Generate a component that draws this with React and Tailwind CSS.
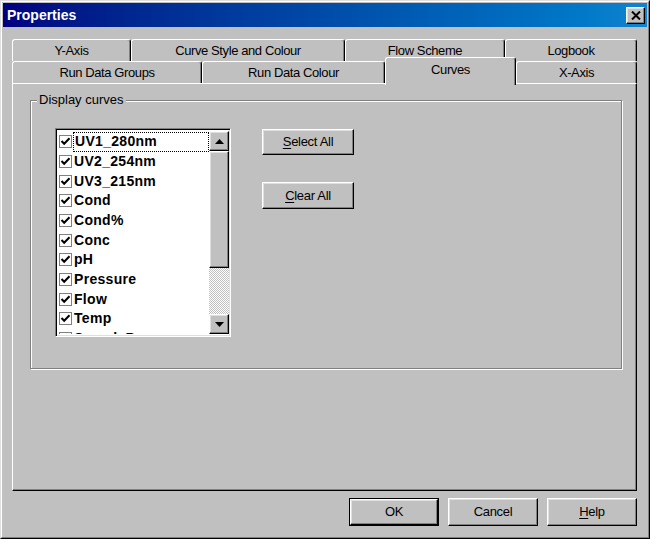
import React from 'react';

const raised =
  'border border-t-white border-l-white border-r-black border-b-black shadow-[inset_-1px_-1px_0_#808080,inset_1px_1px_0_#dfdfdf]';

const backTabs = [
  { label: 'Y-Axis', w: 'w-[119px]' },
  { label: 'Curve Style and Colour', w: 'w-[214px]' },
  { label: 'Flow Scheme', w: 'w-[160px]' },
  { label: 'Logbook', w: 'w-[132px]' },
];

const frontTabs = [
  { label: 'Run Data Groups', w: 'w-[190px]' },
  { label: 'Run Data Colour', w: 'w-[183px]' },
  { label: 'Curves', w: 'w-[131px]', selected: true },
  { label: 'X-Axis', w: 'w-[121px]' },
];

const curves = [
  'UV1_280nm',
  'UV2_254nm',
  'UV3_215nm',
  'Cond',
  'Cond%',
  'Conc',
  'pH',
  'Pressure',
  'Flow',
  'Temp',
  'SamplePres',
];

const Tab = ({ label, w, selected }) => (
  <div
    className={`${w} ${
      selected ? 'relative z-10 h-[28px] -mb-[2px] pb-[4px]' : 'h-[22px]'
    } flex items-center justify-center bg-[#c0c0c0] border-t border-l border-white border-r border-r-black rounded-t-[3px] shadow-[inset_-1px_0_0_#808080] text-[13px] tracking-[-0.4px] text-black`}
  >
    {label}
  </div>
);

const Button = ({ children, className = '' }) => (
  <div
    className={`${raised} ${className} flex items-center justify-center bg-[#c0c0c0] text-[13px] tracking-[-0.3px] text-black`}
  >
    {children}
  </div>
);

const Check = () => (
  <div className="w-[13px] h-[13px] border border-[#808080] bg-white flex items-center justify-center shrink-0">
    <svg width="11" height="11" viewBox="0 0 11 11">
      <path d="M1.5 5 L4.2 7.8 L9.5 2.2" fill="none" stroke="black" strokeWidth="2" />
    </svg>
  </div>
);

const Arrow = ({ up }) => (
  <svg width="9" height="5" viewBox="0 0 9 5">
    <polygon points={up ? '4.5,0 9,5 0,5' : '0,0 9,0 4.5,5'} fill="black" />
  </svg>
);

export default function App() {
  return (
    <div className="w-[650px] h-[539px] bg-[#c0c0c0] font-['Liberation_Sans',Arial,sans-serif] border border-t-[#dfdfdf] border-l-[#dfdfdf] border-r-black border-b-black">
      <div className="w-full h-full border border-t-white border-l-white border-r-[#808080] border-b-[#808080] p-px flex flex-col">
        {/* title bar */}
        <div className="h-[24px] shrink-0 flex items-center justify-between pl-[4px] pr-[2px] bg-linear-to-r from-[#000080] to-[#1084d0]">
          <span className="text-white font-bold text-[14px]">Properties</span>
          <div className={`${raised} w-[19px] h-[17px] bg-[#c0c0c0] flex items-center justify-center`}>
            <svg width="10" height="9" viewBox="0 0 10 9">
              <path d="M1 0.5 L9 8.5 M9 0.5 L1 8.5" stroke="black" strokeWidth="2" />
            </svg>
          </div>
        </div>

        {/* tabs */}
        <div className="mt-[12px] ml-[9px] w-[625px] flex flex-col">
          <div className="flex h-[22px]">
            {backTabs.map((t) => (
              <Tab key={t.label} {...t} />
            ))}
          </div>
          <div className="flex h-[22px] items-end">
            {frontTabs.map((t) => (
              <Tab key={t.label} {...t} />
            ))}
          </div>

          {/* panel */}
          <div className="h-[408px] border border-t-white border-l-white border-r-black border-b-black shadow-[inset_-1px_-1px_0_#808080] pt-[16px] pl-[17px]">
            <div className="relative w-[592px] h-[269px] border border-[#808080] shadow-[1px_1px_0_#fff,inset_1px_1px_0_#fff] pt-[27px] pl-[24px] flex items-start gap-[31px]">
              <span className="absolute -top-[9px] left-[6px] px-[2px] bg-[#c0c0c0] text-[13px] leading-[16px] text-black">
                Display curves
              </span>

              {/* listbox */}
              <div className="w-[176px] h-[209px] bg-white border border-t-[#808080] border-l-[#808080] border-r-white border-b-white shadow-[inset_1px_1px_0_#000,inset_-1px_-1px_0_#dfdfdf] p-[2px] pr-[1px] flex">
                <div className="flex-1 overflow-hidden flex flex-col pt-px">
                  {curves.map((c, i) => (
                    <div key={c} className="h-[19.67px] shrink-0 flex items-center pl-[1px]">
                      <Check />
                      <span
                        className={`ml-px flex-1 h-full flex items-center pl-px text-[14px] font-bold tracking-[0.3px] text-black ${
                          i === 0 ? 'border border-dotted border-black' : ''
                        }`}
                      >
                        {c}
                      </span>
                    </div>
                  ))}
                </div>
                {/* scrollbar */}
                <div className="w-[20px] h-full flex flex-col shrink-0">
                  <div className={`${raised} h-[20px] shrink-0 bg-[#c0c0c0] flex items-center justify-center`}>
                    <Arrow up />
                  </div>
                  <div className={`${raised} h-[117px] shrink-0 bg-[#c0c0c0]`} />
                  <div className="flex-1 bg-[repeating-conic-gradient(#c0c0c0_0_25%,#fff_0_50%)] bg-[length:2px_2px]" />
                  <div className={`${raised} h-[20px] shrink-0 bg-[#c0c0c0] flex items-center justify-center`}>
                    <Arrow />
                  </div>
                </div>
              </div>

              {/* side buttons */}
              <div className="flex flex-col gap-[27px] pt-px">
                <Button className="w-[92px] h-[26px]">
                  <span>
                    <span className="underline underline-offset-2">S</span>elect All
                  </span>
                </Button>
                <Button className="w-[92px] h-[27px]">
                  <span>
                    <span className="underline underline-offset-2">C</span>lear All
                  </span>
                </Button>
              </div>
            </div>
          </div>
        </div>

        {/* dialog buttons */}
        <div className="mt-[7px] ml-[346px] flex gap-[9px]">
          <div className="border border-black">
            <Button className="w-[88px] h-[26px]">OK</Button>
          </div>
          <Button className="w-[90px] h-[28px]">Cancel</Button>
          <Button className="w-[90px] h-[28px]">
            <span>
              <span className="underline underline-offset-2">H</span>elp
            </span>
          </Button>
        </div>
      </div>
    </div>
  );
}
